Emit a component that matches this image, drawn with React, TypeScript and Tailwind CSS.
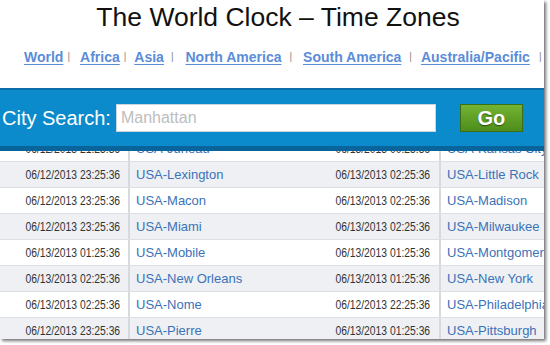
const links = [
  { label: 'World', ml: 'ml-0' },
  { label: 'Africa', ml: 'ml-[10px]' },
  { label: 'Asia', ml: 'ml-[8px]' },
  { label: 'North America', ml: 'ml-[12px]' },
  { label: 'South America', ml: 'ml-[11px]' },
  { label: 'Australia/Pacific', ml: 'ml-[9px]' },
];

const sepMl = ['ml-[4px]', 'ml-[4px]', 'ml-[7px]', 'ml-[8px]', 'ml-[8px]', 'ml-[9px]'];

const rows = [
  ['06/12/2013 21:25:36', 'USA-Juneau', '06/13/2013 00:25:36', 'USA-Kansas City'],
  ['06/12/2013 23:25:36', 'USA-Lexington', '06/13/2013 02:25:36', 'USA-Little Rock'],
  ['06/12/2013 23:25:36', 'USA-Macon', '06/13/2013 02:25:36', 'USA-Madison'],
  ['06/12/2013 23:25:36', 'USA-Miami', '06/13/2013 02:25:36', 'USA-Milwaukee'],
  ['06/13/2013 01:25:36', 'USA-Mobile', '06/13/2013 01:25:36', 'USA-Montgomery'],
  ['06/13/2013 02:25:36', 'USA-New Orleans', '06/13/2013 01:25:36', 'USA-New York'],
  ['06/13/2013 02:25:36', 'USA-Nome', '06/12/2013 22:25:36', 'USA-Philadelphia'],
  ['06/12/2013 23:25:36', 'USA-Pierre', '06/13/2013 01:25:36', 'USA-Pittsburgh'],
];

function Stamp({ value }: { value: string }) {
  // the dates in the shot are squeezed sideways
  return <span className="inline-block origin-right scale-x-[0.86] whitespace-nowrap">{value}</span>;
}

export default function App() {
  return (
    <div className="w-[550px] h-[345px] bg-white font-[family-name:Liberation_Sans,Arial,sans-serif]">
      <div className="w-[544px] h-[339px] bg-white overflow-hidden flex flex-col shadow-[2px_2px_3px_rgba(0,0,0,0.55)]">
        {/* Title */}
        <h1 className="pt-[2px] text-center text-[26.5px] leading-[30px] text-[#111] pl-[12px] whitespace-nowrap">
          The World Clock – Time Zones
        </h1>

        {/* Region links */}
        <nav className="mt-[15px] h-[20px] flex items-center pl-[24px] text-[14px] leading-[20px] font-bold whitespace-nowrap">
          {links.map((l, i) => (
            <div key={l.label} className="flex items-center">
              <a className={`${l.ml} text-[#5b8cd8] underline underline-offset-2`}>{l.label}</a>
              <span className={`${sepMl[i]} text-[10px] font-normal text-[#888]`}>|</span>
            </div>
          ))}
        </nav>

        {/* City search bar */}
        <div className="mt-[21px] h-[63px] shrink-0 flex flex-col">
          <div className="h-[2px] bg-[#0c6ea8]" />
          <div className="h-[56px] bg-[#0b8bcb] flex items-center pl-[2px]">
            <span className="text-white text-[20px] leading-none">City Search:</span>
            <div className="ml-[5px] w-[320px] h-[28px] bg-white border border-[#c9d4dc] flex items-center pl-[4px] text-[16px] text-[#bdbdbd]">
              Manhattan
            </div>
            <button className="ml-[24px] w-[63px] h-[28px] border border-[#3c6f14] bg-gradient-to-b from-[#74b332] to-[#4d8d1c] text-white font-bold text-[20px] leading-none [text-shadow:0_1px_1px_rgba(0,0,0,0.5)]">
              Go
            </button>
          </div>
          <div className="h-[5px] bg-[#09649c]" />
        </div>

        {/* Time table */}
        <div className="flex-1 overflow-hidden">
          <div className="-mt-[15px]">
            {rows.map((r, i) => (
              <div
                key={r[1]}
                className={`h-[26px] flex items-stretch border-b border-[#dcdfe3] ${i % 2 === 1 ? 'bg-[#eef0f3]' : 'bg-white'}`}
              >
                <div className="w-[128px] flex items-center justify-end pr-[8px] text-[12px] text-[#333]">
                  <Stamp value={r[0]} />
                </div>
                <div className="w-[2px] bg-[#d6d9dd]" />
                <div className="w-[180px] flex items-center pl-[6px] text-[13px] text-[#3b72b8] whitespace-nowrap">
                  {r[1]}
                </div>
                <div className="w-[129px] flex items-center justify-end pr-[9px] text-[12px] text-[#333]">
                  <Stamp value={r[2]} />
                </div>
                <div className="w-[2px] bg-[#d6d9dd]" />
                <div className="flex-1 flex items-center pl-[6px] text-[13px] text-[#3b72b8] whitespace-nowrap overflow-hidden">
                  {r[3]}
                </div>
              </div>
            ))}
          </div>
        </div>
      </div>
    </div>
  );
}
